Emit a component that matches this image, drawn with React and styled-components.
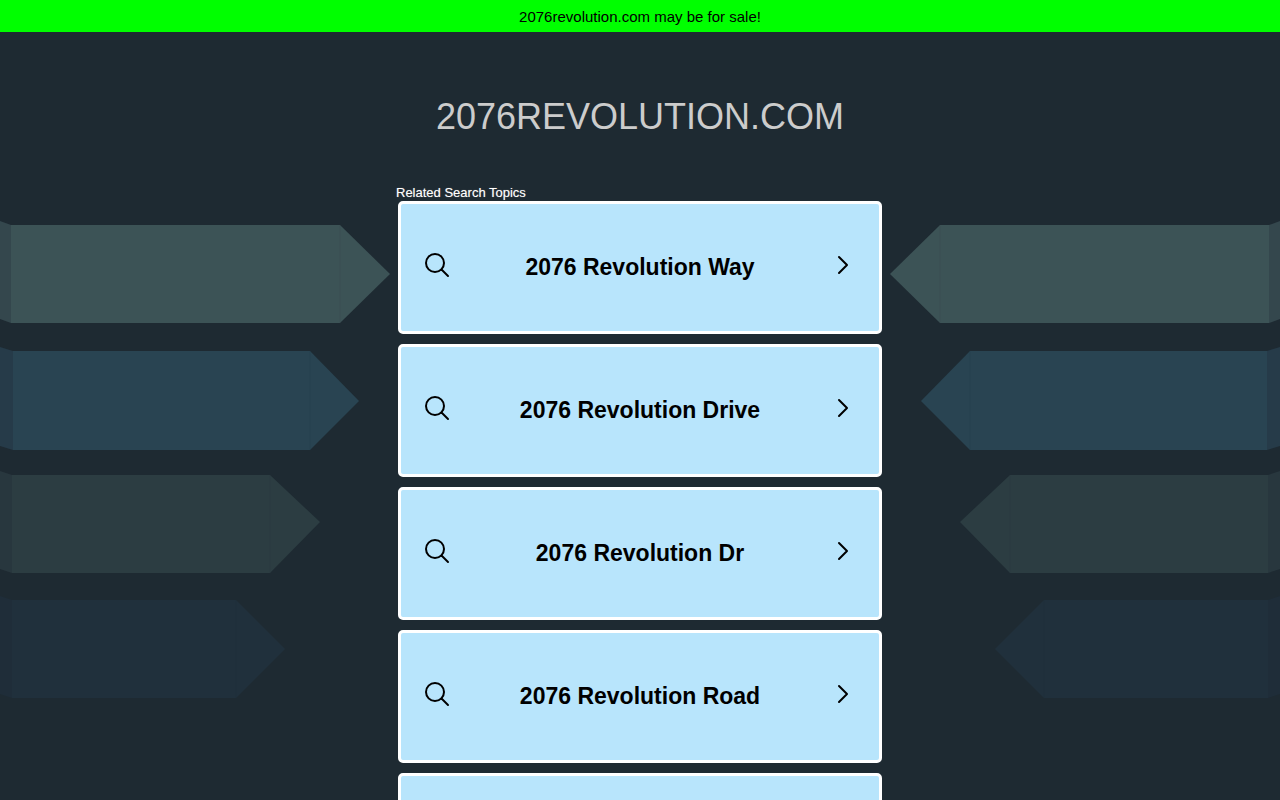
import React from 'react';
import styled, { createGlobalStyle } from 'styled-components';

const GlobalStyle = createGlobalStyle`
  * {
    box-sizing: border-box;
  }
  body {
    margin: 0;
    background: #1e2a32;
    font-family: 'Liberation Sans', Arial, sans-serif;
    overflow-x: hidden;
  }
`;
const SaleBanner = styled.a`
  display: block;
  padding: 9px 0 7px;
  background: #00ff00;
  color: #000;
  font-size: 15px;
  line-height: 16px;
  text-align: center;
  text-decoration: none;
`;
const Title = styled.h1`
  margin: 0;
  padding: 65px 16px 48px;
  color: #ccc;
  font-size: 36px;
  font-weight: 400;
  line-height: 40px;
  text-align: center;
  text-transform: uppercase;
`;
const Main = styled.main`
  display: grid;
  grid-template-columns: minmax(0, 1fr) minmax(0, 488px) minmax(0, 1fr);
  align-items: start;
  padding-bottom: 40px;
`;
const Side = styled.div`
  display: flex;
  justify-content: flex-end;
  overflow: hidden;
  transform: ${({ $flipped }) => ($flipped ? 'scaleX(-1)' : 'none')};
`;
const Ribbons = styled.svg`
  flex: none;
  width: 396px;
  height: 520px;
`;
const Heading = styled.h2`
  margin: 0;
  color: #fff;
  font-size: 13px;
  font-weight: 400;
  line-height: 16px;
  text-shadow: 0 0 1px #848484;
`;
const TopicList = styled.ul`
  display: flex;
  flex-direction: column;
  gap: 10px;
  margin: 0;
  padding: 0 2px;
  list-style: none;
`;
const TopicLink = styled.a`
  display: flex;
  align-items: center;
  min-height: 133px;
  padding: 0 23px 2px;
  border: 3px solid #fff;
  border-radius: 5px;
  background: #b8e5fc;
  color: #000;
  font-size: 23px;
  font-weight: 700;
  line-height: 28px;
  text-align: center;
  text-decoration: none;
`;
const TopicName = styled.span`
  flex: 1;
`;
const Icon = styled.svg`
  flex: none;
  width: 28px;
  height: 28px;
  margin-bottom: 2px;
  fill: none;
  stroke: #000;
  stroke-width: 2;
  stroke-linecap: round;
  stroke-linejoin: round;
`;

const topics = [
  '2076 Revolution Way',
  '2076 Revolution Drive',
  '2076 Revolution Dr',
  '2076 Revolution Road',
  '2076 Revolution Street',
];

const ribbons = [
  { top: 40, bottom: 138, mid: 89, fold: 11, end: 340, tip: 390, color: '#3c5356', side: '#34474d' },
  { top: 166, bottom: 265, mid: 216, fold: 13, end: 310, tip: 359, color: '#294452', side: '#263b49' },
  { top: 290, bottom: 388, mid: 337, fold: 12, end: 270, tip: 320, color: '#2c3d42', side: '#28373e' },
  { top: 415, bottom: 513, mid: 464, fold: 12, end: 236, tip: 285, color: '#20303c', side: '#1f2d39' },
];

function SideRibbons({ flipped }) {
  return (
    <Side $flipped={flipped} aria-hidden="true">
      <Ribbons viewBox="0 0 396 520">
        {ribbons.map(({ top, bottom, mid, fold, end, tip, color, side }) => (
          <g key={top}>
            <path fill={side} d={`M0 ${top - 4}L${fold} ${top}V${bottom}L0 ${bottom - 4}Z`} />
            <path fill={color} d={`M${fold} ${top}H${end}L${tip} ${mid}L${end} ${bottom}H${fold}Z`} />
            <path stroke={side} strokeOpacity="0.3" d={`M${end} ${top}V${bottom}`} />
          </g>
        ))}
      </Ribbons>
    </Side>
  );
}

function Topic({ name }) {
  return (
    <li>
      <TopicLink href="#">
        <Icon viewBox="0 0 28 28" aria-hidden="true">
          <circle cx="11" cy="11" r="9" />
          <path d="M17.5 17.5L24 24" />
        </Icon>
        <TopicName>{name}</TopicName>
        <Icon viewBox="0 0 28 28" aria-hidden="true">
          <path d="M11 5L19 13L11 21" />
        </Icon>
      </TopicLink>
    </li>
  );
}

function App() {
  return (
    <>
      <GlobalStyle />
      <SaleBanner href="#">2076revolution.com may be for sale!</SaleBanner>
      <Title>2076revolution.com</Title>
      <Main>
        <SideRibbons />
        <section>
          <Heading>Related Search Topics</Heading>
          <TopicList>
            {topics.map((name) => (
              <Topic key={name} name={name} />
            ))}
          </TopicList>
        </section>
        <SideRibbons flipped />
      </Main>
    </>
  );
}

export default App;
